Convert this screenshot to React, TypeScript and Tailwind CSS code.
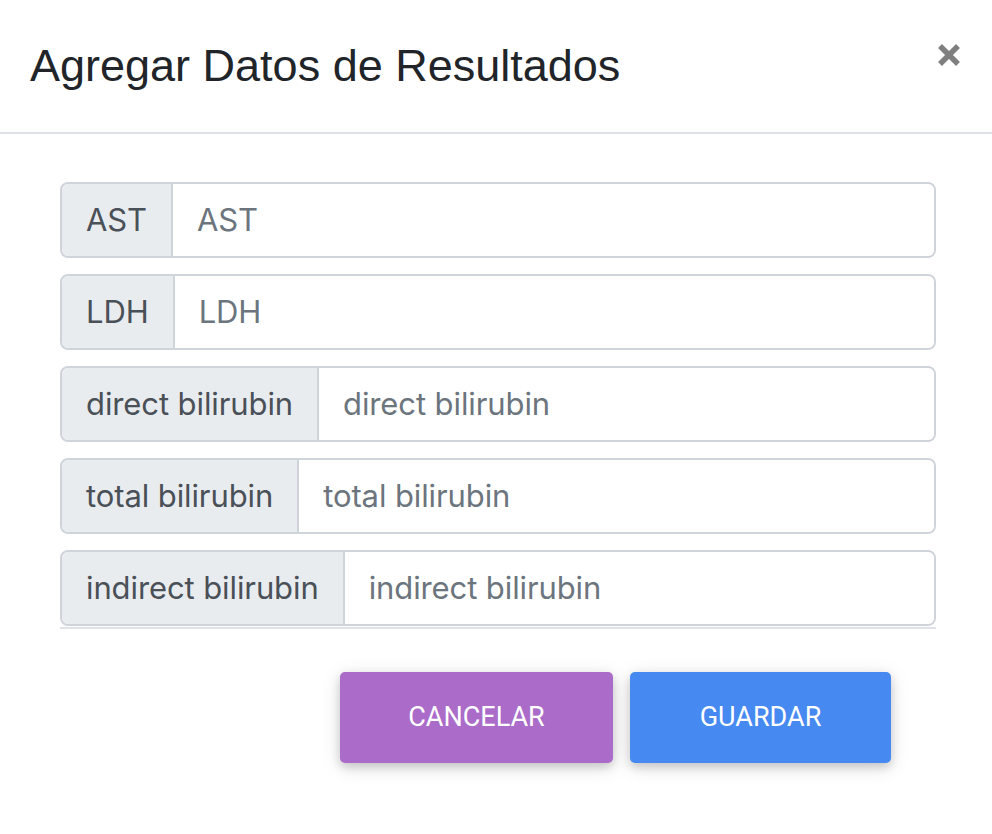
import React from "react";

const rows = ["AST", "LDH", "direct bilirubin", "total bilirubin", "indirect bilirubin"];

export default function App() {
  return (
    <div className="w-[992px] h-[834px] bg-white overflow-hidden" style={{ fontFamily: "Inter, 'Noto Sans', sans-serif" }}>
      <div className="h-[134px] flex items-center justify-between pl-[30px] pr-[31px] border-b-2 border-[#dee2e6]">
        <h5
          className="text-[45px] leading-[52px] font-normal text-[#212529]"
          style={{ fontFamily: "'Liberation Sans', Arial, sans-serif" }}
        >
          Agregar Datos de Resultados
        </h5>
        <button className="mb-[22px] w-[24px] h-[24px] flex items-center justify-center">
          <svg width="24" height="24" viewBox="0 0 24 24">
            <path d="M3 3 L21 21 M21 3 L3 21" stroke="#7f7f7f" strokeWidth="5.5" strokeLinecap="butt" />
          </svg>
        </button>
      </div>
      <div className="pt-[48px] pl-[60px] pr-[56px]">
        <div className="flex flex-col gap-[16px]">
          {rows.map((r) => (
            <div key={r} className="h-[76px] flex border-2 border-[#ced4da] rounded-[8px] overflow-hidden">
              <div className="bg-[#e9ecef] px-[24px] flex items-center text-[31px] tracking-[-0.1px] text-[#495057] border-r-2 border-[#ced4da] whitespace-nowrap">
                {r}
              </div>
              <input
                placeholder={r}
                className="flex-1 min-w-0 px-[24px] text-[31px] tracking-[-0.1px] text-[#495057] placeholder:text-[#6c757d] outline-none bg-white"
              />
            </div>
          ))}
        </div>
        <div className="h-[2px] bg-[#dfe2e6] mt-[1px]" />
      </div>
      <div className="flex justify-end gap-[17px] pr-[101px] pt-[43px]" style={{ fontFamily: "Roboto, sans-serif" }}>
        <button className="w-[273px] h-[91px] rounded-[5px] bg-[#aa6bc9] text-white text-[27px] uppercase shadow-[0_4px_10px_0_rgba(0,0,0,0.16),0_4px_20px_0_rgba(0,0,0,0.12)]">
          Cancelar
        </button>
        <button className="w-[261px] h-[91px] rounded-[5px] bg-[#4689f1] text-white text-[27px] uppercase shadow-[0_4px_10px_0_rgba(0,0,0,0.16),0_4px_20px_0_rgba(0,0,0,0.12)]">
          Guardar
        </button>
      </div>
    </div>
  );
}
